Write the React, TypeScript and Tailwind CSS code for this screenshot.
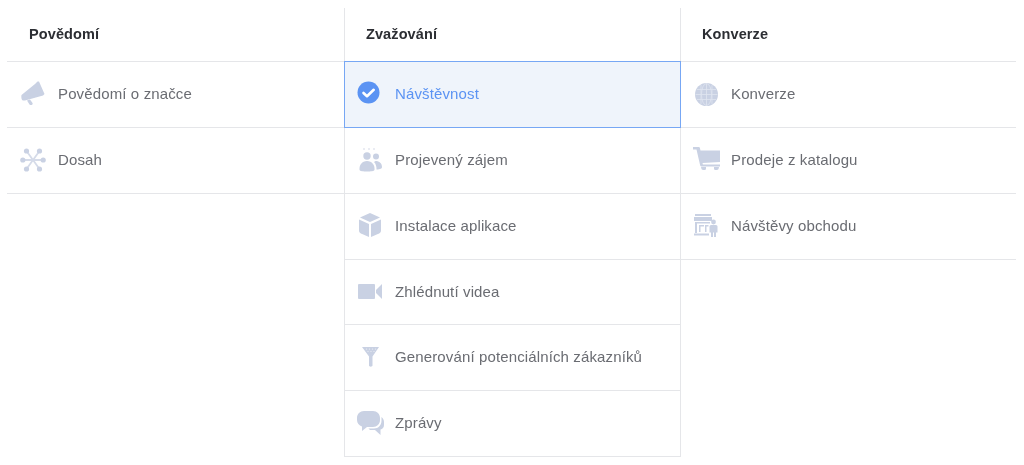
import type { ReactNode } from "react"

const iconColor = "#c9d1e3"

function Megaphone() {
    return (
        <svg width="24" height="25" viewBox="0 0 24 25" fill={iconColor} className="max-w-none">
            <path d="M.5 14 14 3 16.500.5H18L23.500 13l-1.500 1.500-18 5H2C.5 19.500 0 16 .5 14z" />
            <path d="M6 19.500l3-1 2.500 3.500c1 1.500-1.800 3-3 1.500z" />
        </svg>
    )
}

function Reach() {
    return (
        <svg width="26" height="26" viewBox="0 0 26 26" fill={iconColor} stroke="#d5dbe9" className="max-w-none">
            <path d="M13 13 6.500 4M13 13 19.500 4M13 13 6.500 22M13 13 19.500 22M13 13H3M13 13H23" strokeWidth="1.800" />
            <g stroke="none">
                <circle cx="6.500" cy="4" r="2.600" />
                <circle cx="19.500" cy="4" r="2.600" />
                <circle cx="6.500" cy="22" r="2.600" />
                <circle cx="19.500" cy="22" r="2.600" />
                <circle cx="2.800" cy="13" r="2.600" />
                <circle cx="23.200" cy="13" r="2.600" />
            </g>
        </svg>
    )
}

function CheckCircle() {
    return (
        <svg width="23" height="23" viewBox="0 0 23 23" className="max-w-none -translate-x-[2px] -translate-y-[1px]">
            <circle cx="11.500" cy="11.500" r="11" fill="#5b93f3" />
            <path d="M6.500 12l3.500 3.200 6.700-6.400" fill="none" stroke="#fff" strokeWidth="2.600" strokeLinecap="round" strokeLinejoin="round" />
        </svg>
    )
}

function People() {
    return (
        <svg width="23" height="24" viewBox="0 0 23 24" fill={iconColor} className="max-w-none">
            <g fill="#e3e6ef">
                <circle cx="5" cy="1" r="1" />
                <circle cx="10" cy="1" r="1" />
                <circle cx="15" cy="1" r="1" />
            </g>
            <circle cx="8" cy="8" r="3.700" />
            <circle cx="17" cy="8.500" r="3" />
            <path d="M.5 22c-.5-5 2.500-9 7.500-9s8 4 7.500 9c-.5 2-14.500 2-15 0z" />
            <path d="M16.500 13c4 0 6.500 2.500 6.500 6 0 1.500-1.500 2.500-5.500 2.500 0-3-.5-5.500-2.500-7.500z" />
        </svg>
    )
}

function Box() {
    return (
        <svg width="22" height="24" viewBox="0 0 22 24" fill={iconColor} className="max-w-none -translate-y-[1px]">
            <path d="M11 0 21 4.500 11 9 1 4.500z" />
            <path d="M0 6.500 10 11v13L2 20.500c-1.300-.6-2-1.500-2-3z" />
            <path d="M22 6.500 12 11v13l8-3.500c1.300-.6 2-1.500 2-3z" />
        </svg>
    )
}

function Video() {
    return (
        <svg width="24" height="15" viewBox="0 0 24 15" fill={iconColor} className="max-w-none">
            <rect x="0" y="0" width="17" height="15" rx="1" />
            <path d="M24 0v15l-6-6V6z" />
        </svg>
    )
}

function Funnel() {
    return (
        <svg width="17" height="20" viewBox="0 0 17 20" fill={iconColor} className="max-w-none">
            <path d="M0 0h17l-6.500 9.500v9c0 1.500-3.500 1.500-3.500 0v-9z" />
            <g fill="#eef0f6">
                <circle cx="4.500" cy="2" r=".6" />
                <circle cx="7.500" cy="2" r=".6" />
                <circle cx="10.500" cy="2" r=".6" />
                <circle cx="13.500" cy="2" r=".6" />
                <circle cx="6" cy="4.500" r=".6" />
                <circle cx="9" cy="4.500" r=".6" />
                <circle cx="12" cy="4.500" r=".6" />
            </g>
        </svg>
    )
}

function Chat() {
    return (
        <svg width="27" height="24" viewBox="0 0 27 24" fill={iconColor} className="max-w-none">
            <path d="M7 0h9c4 0 7 3 7 7v2c0 4-3 7-7 7H10l-5 4v-4.500C2 14.500 0 12 0 9V7c0-4 3-7 7-7z" />
            <path d="M24.500 6c1.500 1 2.500 3 2.500 5v3c0 2.500-1.500 4-3.500 4.500V24l-5.500-5h-5l-1.500-1.500H17c4.500 0 7.500-3.500 7.500-8z" />
        </svg>
    )
}

function Globe() {
    return (
        <svg width="23" height="23" viewBox="0 0 23 23" className="max-w-none translate-y-[1px]">
            <circle cx="11.500" cy="11.500" r="11.500" fill={iconColor} />
            <g fill="none" stroke="#e0e5f0" strokeWidth=".8">
                <ellipse cx="11.500" cy="11.500" rx="5" ry="11" />
                <path d="M11.500 .5v22M.5 11.500h22M2 6.500h19M2 16.500h19M6 2v19M17 2v19" />
            </g>
        </svg>
    )
}

function Cart() {
    return (
        <svg width="27" height="23" viewBox="0 0 27 23" fill={iconColor} className="max-w-none -translate-y-[1px]">
            <path d="M0 0h5.500c.8 0 1.200.4 1.400 1l.6 2.500H27V15l-17.500 1 .4 1.500H27v2H8.500c-.7 0-1.100-.4-1.300-1L3.500 2.500H0z" />
            <path d="M8 20h5v2c0 1.300-4 1.300-4.500 0zM21 20h5l-.5 2c-.5 1.300-4.500 1.300-4.500 0z" />
        </svg>
    )
}

function Store() {
    return (
        <svg width="24" height="23" viewBox="0 0 24 23" fill={iconColor} className="max-w-none">
            <rect x="1" y="0" width="16" height="2" />
            <rect x="0" y="3" width="18" height="4" />
            <path d="M1 8h15v1.500H3V19H1z" />
            <path d="M5 11h5v1.500H6.500V18H5zM11 11h3.500v1.500h-2V18H11z" />
            <rect x="0" y="19.500" width="15" height="2" />
            <circle cx="19.500" cy="8" r="2.400" />
            <path d="M15.500 12.500c0-1 1-1.500 2-1.500h4c1 0 2 .5 2 1.500v6H22V23h-2v-4.500h-1V23h-2v-4.500h-1.500z" />
        </svg>
    )
}

type RowProps = {
    icon: ReactNode
    label: string
    active?: boolean
    first?: boolean
    short?: boolean
}

function Row(props: RowProps) {
    let rowClass = "flex h-[66px] items-center border-b border-[#e5e6e9] text-[#6a6c72]"
    if (props.short) rowClass = "flex h-[65px] items-center border-b border-[#e5e6e9] text-[#6a6c72]"
    if (props.active) rowClass = "relative z-10 -mx-px -mt-px flex h-[67px] items-center border border-[#77a7f4] bg-[#eff4fb] text-[#5b93f3]"

    return (
        <div className={rowClass}>
            <div className={props.first ? "flex w-[51px] shrink-0 -translate-y-[1px] justify-center" : "flex w-[50px] shrink-0 -translate-y-[1px] justify-center"}>
                {props.icon}
            </div>
            <span className="text-[15px] tracking-[0.13px]">{props.label}</span>
        </div>
    )
}

type ColumnProps = {
    title: string
    className?: string
    first?: boolean
    children: ReactNode
}

function Column(props: ColumnProps) {
    return (
        <div className={props.className}>
            <div
                className={
                    (props.first ? "pl-[22px] " : "pl-[21px] ") +
                    "flex h-[54px] items-center border-b border-[#e5e6e9] text-[14.5px] font-bold tracking-[0.1px] text-[#2c2e33]"
                }
            >
                {props.title}
            </div>
            {props.children}
        </div>
    )
}

export default function App() {
    return (
        <div className="h-[465px] w-[1024px] overflow-hidden bg-white pl-[7px] pt-[8px] font-['Liberation_Sans',Arial,sans-serif] blur-[0.4px]">
            <div className="grid w-[1009px] grid-cols-[337px_337px_335px]">
                <Column title="Povědomí" first>
                    <Row icon={<Megaphone />} label="Povědomí o značce" first />
                    <Row icon={<Reach />} label="Dosah" first />
                </Column>
                <Column title="Zvažování" className="border-x border-[#e5e6e9]">
                    <Row icon={<CheckCircle />} label="Návštěvnost" active />
                    <Row icon={<People />} label="Projevený zájem" />
                    <Row icon={<Box />} label="Instalace aplikace" />
                    <Row icon={<Video />} label="Zhlédnutí videa" short />
                    <Row icon={<Funnel />} label="Generování potenciálních zákazníků" />
                    <Row icon={<Chat />} label="Zprávy" />
                </Column>
                <Column title="Konverze">
                    <Row icon={<Globe />} label="Konverze" />
                    <Row icon={<Cart />} label="Prodeje z katalogu" />
                    <Row icon={<Store />} label="Návštěvy obchodu" />
                </Column>
            </div>
        </div>
    )
}
